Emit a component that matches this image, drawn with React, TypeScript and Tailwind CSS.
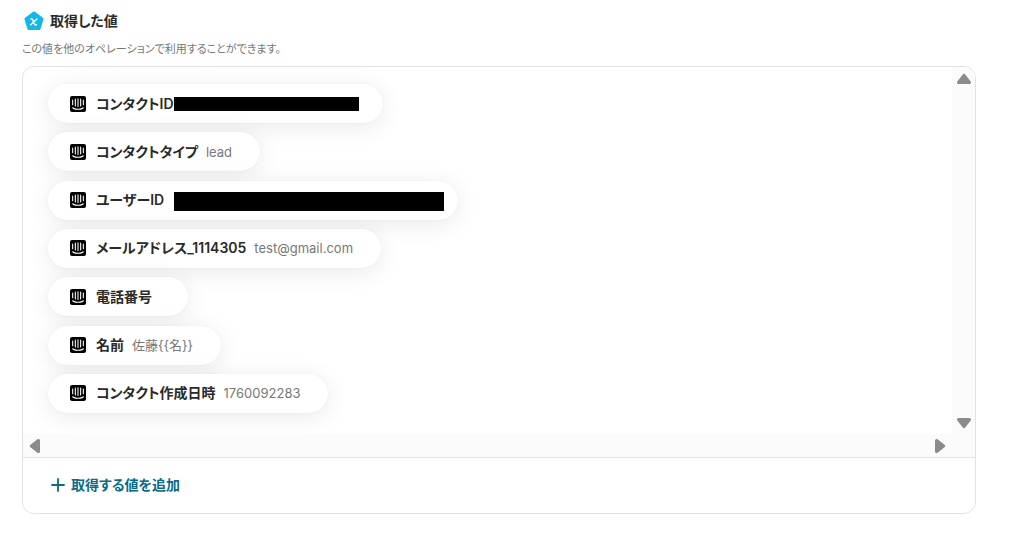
import React from "react";
import { SiIntercom } from "react-icons/si";

type Item = {
  label: string;
  value?: string;
  slot?: string;
  mask?: string;
};

const items: Item[] = [
  { label: "コンタクトID", slot: "w-[173px]", mask: "-left-2 -top-[7px] h-3.5 w-[185px]" },
  { label: "コンタクトタイプ", value: "lead" },
  { label: "ユーザーID", slot: "w-[258px]", mask: "left-0.5 -top-2 h-[19px] w-[270px]" },
  { label: "メールアドレス_1114305", value: "test@gmail.com" },
  { label: "電話番号", value: "" },
  { label: "名前", value: "佐藤{{名}}" },
  { label: "コンタクト作成日時", value: "1760092283" },
];

function VariableIcon() {
  return (
    <svg viewBox="0 0 20 20" className="size-5" aria-hidden="true">
      <path
        d="M10 2 18 8 15.1 17.6H4.9L2 8Z"
        fill="#12b8e8"
        stroke="#12b8e8"
        strokeWidth="3"
        strokeLinejoin="round"
      />
      <path
        d="M7 8h1.3l2.8 5.8h1.5M13 8 6.7 13.8"
        fill="none"
        stroke="#fff"
        strokeWidth="1.5"
        strokeLinecap="round"
        strokeLinejoin="round"
      />
    </svg>
  );
}

function Arrow({ turn }: { turn: string }) {
  return (
    <svg viewBox="0 0 16 12" className={`h-3 w-4 ${turn}`} aria-hidden="true">
      <path
        d="M8 2.4 13.4 9.4H2.6Z"
        fill="#8b8b8b"
        stroke="#8b8b8b"
        strokeWidth="3.2"
        strokeLinejoin="round"
      />
    </svg>
  );
}

function Chip({ item }: { item: Item }) {
  return (
    <li className="flex h-[39px] items-center rounded-full bg-white pr-7 pl-[22px] shadow-[0_4px_24px_rgba(0,0,0,0.09),0_0_2px_rgba(0,0,0,0.05)]">
      <SiIntercom className="size-4 shrink-0 text-black" aria-hidden="true" />
      <span className="ml-2.5 text-sm leading-5 font-semibold whitespace-nowrap text-[#2a2a2a]">
        {item.label}
      </span>
      {item.mask ? (
        <span className={`relative ml-2 ${item.slot}`}>
          <span className={`absolute bg-black ${item.mask}`} />
        </span>
      ) : (
        <span className="ml-2 text-[13px] leading-5 whitespace-nowrap text-[#777]">
          {item.value}
        </span>
      )}
    </li>
  );
}

export default function App() {
  return (
    <main className="min-h-screen bg-white pt-2.5 pr-[57px] pb-5 pl-[22px] font-['Inter','Noto_Sans_CJK_JP',sans-serif] text-[#2a2a2a] [font-feature-settings:'palt']">
      <header>
        <h1 className="flex items-center gap-1.5 pl-0.5 text-sm leading-[22px] font-semibold">
          <VariableIcon />
          取得した値
        </h1>
        <p className="mt-2 text-[11px] leading-[18px] text-[#777]">
          この値を他のオペレーションで利用することができます。
        </p>
      </header>

      <section className="mt-2 overflow-hidden rounded-xl border border-[#e2e2e2]">
        <div className="grid grid-cols-[1fr_23px] grid-rows-[367px_23px] border-b border-[#e2e2e2]">
          <ul className="flex flex-col items-start justify-between overflow-hidden pt-[17px] pr-6 pb-[21px] pl-[25px]">
            {items.map((item) => (
              <Chip key={item.label} item={item} />
            ))}
          </ul>
          <div className="flex flex-col items-center justify-between bg-[#fbfbfb] pt-1.5 pb-[5px]">
            <button type="button" aria-label="上へスクロール">
              <Arrow turn="" />
            </button>
            <button type="button" aria-label="下へスクロール">
              <Arrow turn="rotate-180" />
            </button>
          </div>
          <div className="flex items-center justify-between bg-[#fbfbfb] px-1">
            <button type="button" aria-label="左へスクロール">
              <Arrow turn="-rotate-90" />
            </button>
            <button type="button" aria-label="右へスクロール">
              <Arrow turn="rotate-90" />
            </button>
          </div>
          <div className="bg-[#fbfbfb]" />
        </div>
        <div className="flex h-[55px] items-center px-7 pb-0.5">
          <button
            type="button"
            className="flex items-center gap-1.5 text-sm leading-5 font-semibold text-[#0b6a85]"
          >
            <svg viewBox="0 0 14 14" className="size-3.5" aria-hidden="true">
              <path
                d="M7 1v12M1 7h12"
                stroke="currentColor"
                strokeWidth="1.8"
                strokeLinecap="round"
              />
            </svg>
            取得する値を追加
          </button>
        </div>
      </section>
    </main>
  );
}
